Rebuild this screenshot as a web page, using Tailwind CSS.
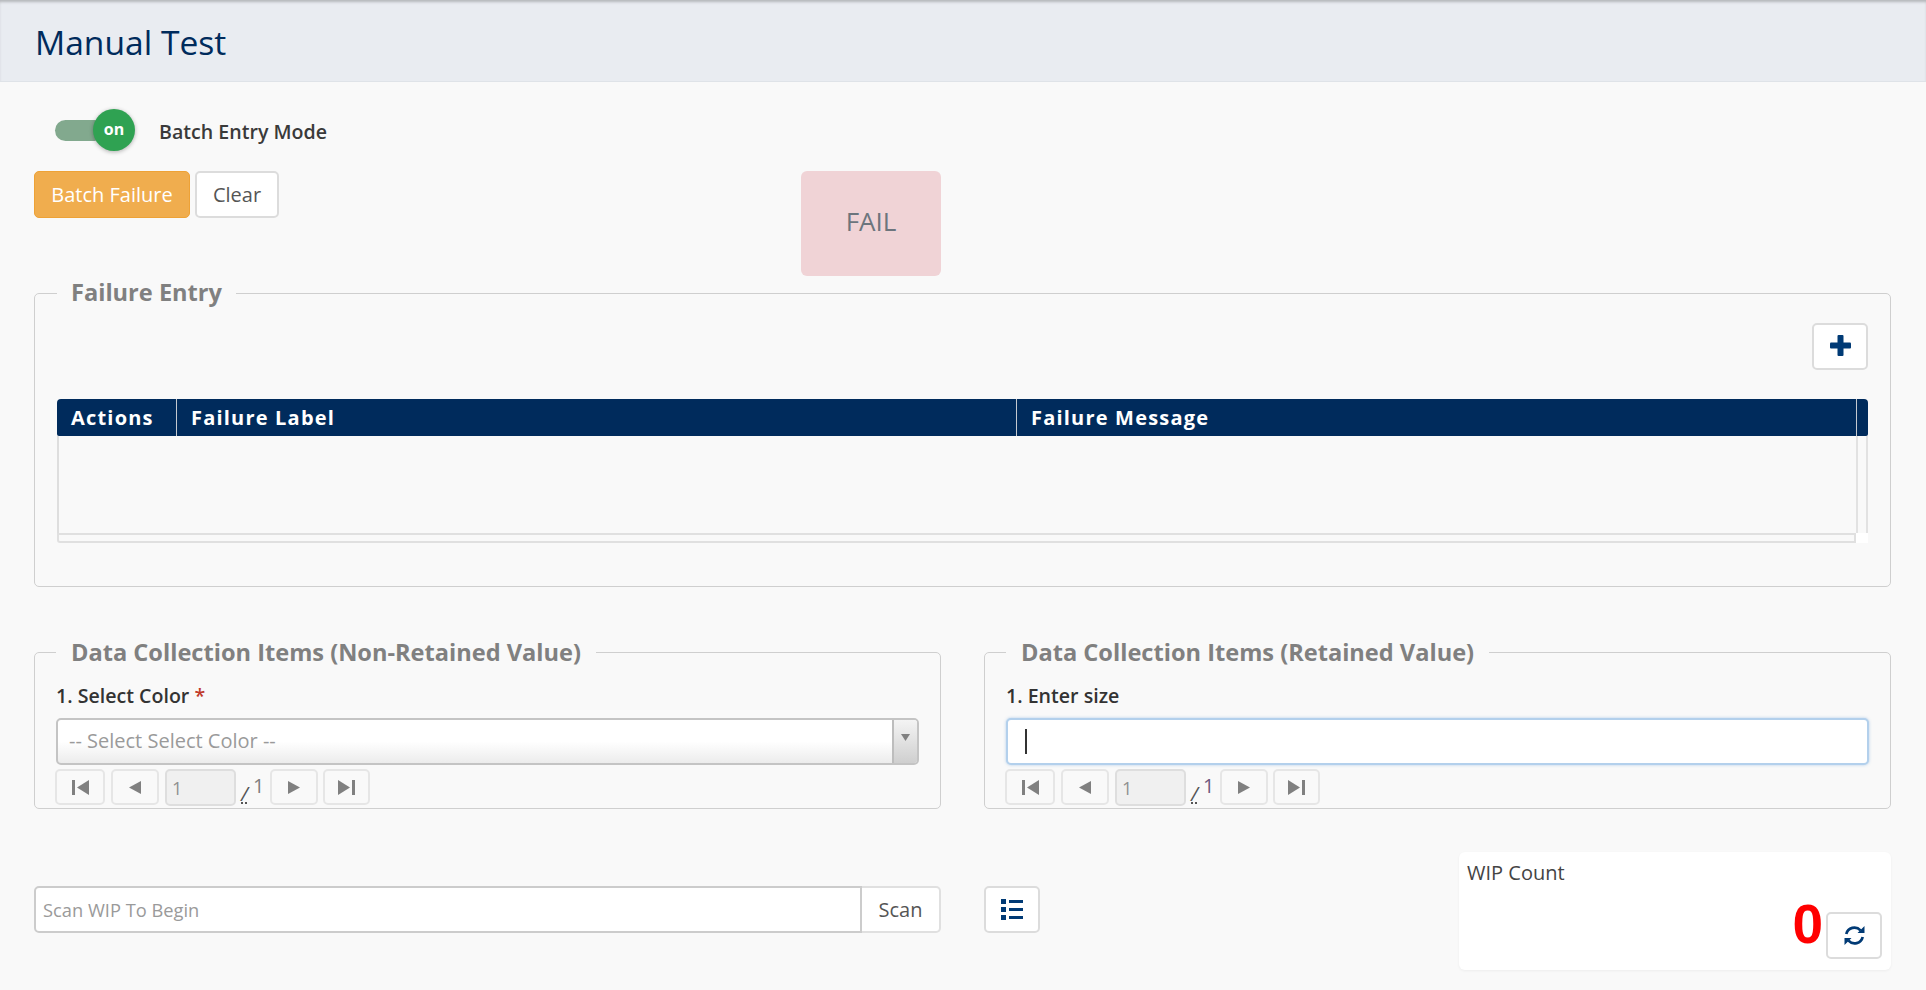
<!DOCTYPE html>
<html lang="en">
<head>
  <meta charset="UTF-8">
  <title>Manual Test</title>
  <script src="https://cdn.jsdelivr.net/npm/@tailwindcss/browser@4"></script>
</head>
<body class="bg-[#f9f9f9] min-h-screen font-['Open_Sans',sans-serif] text-[20px] text-[#333]">

  <!-- Page header -->
  <header class="h-[82px] flex items-center pl-[35px] pt-[3px] bg-[#e9ecf1] border-b border-[#dfe3e8] shadow-[inset_0_3px_3px_-1px_#b4b6ba]">
    <h1 class="text-[33.6px] text-[#002b5c]">Manual Test</h1>
  </header>

  <main class="pl-[34px] pr-[35px]">

    <!-- Batch toggle -->
    <div class="flex items-center h-[42px] mt-[27px] pl-[21px]">
      <div class="relative w-[80px] h-[42px]">
        <div class="absolute left-0 top-[11px] w-[50px] h-[21px] rounded-full bg-[#82a98e]"></div>
        <div class="absolute left-[38px] top-0 w-[42px] h-[42px] rounded-full bg-[#2fa252] shadow-[0_1px_4px_rgba(0,0,0,0.3)] flex items-center justify-center text-white text-[16px] font-bold leading-none pb-[2px]">on</div>
      </div>
      <span class="ml-[24px] font-semibold text-[19.6px] text-[#3a3a3a] pt-[3px]">Batch Entry Mode</span>
    </div>

    <!-- Actions and status -->
    <div class="grid grid-cols-2 gap-[43px] mt-[20px]">
      <div class="flex justify-between items-start">
        <div class="flex gap-[5px]">
          <button class="h-[47px] w-[156px] rounded-[5px] bg-[#f0ad4e] border border-[#eea236] text-white text-[20px]">Batch Failure</button>
          <button class="h-[47px] w-[84px] rounded-[5px] bg-white border-2 border-[#dcdcdc] text-[#555] text-[20px]">Clear</button>
        </div>
        <div class="w-[140px] h-[105px] rounded-[6px] bg-[#f0d3d6] flex items-center justify-center pb-[4px] text-[26px] text-[#6c757d]">FAIL</div>
      </div>
      <div></div>
    </div>

    <!-- Failure entry -->
    <fieldset class="mt-[2px] border border-[#cfcfcf] rounded-[5px] px-[22px] pb-[43px]">
      <legend class="px-[14px] h-[30px] leading-[28px] text-[23.6px] font-bold text-[#808080]">Failure Entry</legend>
      <div class="flex justify-end pt-[15px]">
        <button class="w-[56px] h-[47px] rounded-[5px] bg-white border-2 border-[#dcdcdc] flex items-center justify-center pb-[3px]">
          <svg class="w-[21px] h-[21px]" viewBox="0 0 21 21" fill="#003a75"><rect x="7.5" width="6" height="21" rx="1"/><rect y="7.5" width="21" height="6" rx="1"/></svg>
        </button>
      </div>
      <div class="mt-[29px]">
        <div class="flex h-[37px] rounded-t-[4px] rounded-b-[2px] bg-[#002b5c] text-white font-bold text-[20px] tracking-[1.2px] leading-[37px]">
          <div class="w-[120px] pl-[14px] border-r border-[#c4c9d0]">Actions</div>
          <div class="w-[840px] pl-[14px] border-r border-[#c4c9d0]">Failure Label</div>
          <div class="flex-1 pl-[14px] border-r border-[#c4c9d0]">Failure Message</div>
          <div class="w-[11px]"></div>
        </div>
        <div class="flex h-[97px] border-l-2 border-[#dedede]">
          <div class="flex-1"></div>
          <div class="w-[12px] border-x-2 border-[#e2e2e2]"></div>
        </div>
        <div class="flex h-[10px]">
          <div class="flex-1 border-2 border-[#e0e0e0] rounded-bl-[3px]"></div>
          <div class="w-[12px] bg-white"></div>
        </div>
      </div>
    </fieldset>

    <!-- Data collection -->
    <div class="grid grid-cols-2 gap-[43px] mt-[50px]">
      <fieldset class="border border-[#cfcfcf] rounded-[5px] pl-[21px] pr-[21px] pb-[2px]">
        <legend class="px-[15px] h-[30px] leading-[30px] text-[23.6px] font-bold text-[#808080]">Data Collection Items (Non-Retained Value)</legend>
        <label class="block mt-[17px] h-[24px] leading-[24px] font-semibold text-[19.6px] text-[#333]">1. Select Color <span class="text-[#c0392b]">*</span></label>
        <div class="mt-[10px] h-[47px] flex rounded-[5px] border-2 border-[#c4c4c4] bg-gradient-to-b from-white from-50% to-[#ececec] overflow-hidden">
          <div class="flex-1 pl-[11px] leading-[41px] text-[#9a9a9a] text-[20px]">-- Select Select Color --</div>
          <div class="w-[25px] border-l-2 border-[#bdbdbd] bg-gradient-to-b from-[#f4f4f4] to-[#cfcfcf] flex justify-center pt-[14px]">
            <svg class="w-[9px] h-[7px]" viewBox="0 0 9 7" fill="#808080"><path d="M0 0h9L4.500 7z"/></svg>
          </div>
        </div>
        <div class="mt-[4px] -ml-[1px] flex items-start h-[37px] text-[#808080]">
          <button class="w-[50px] h-[36px] rounded-[5px] border-2 border-[#e6e6e6] flex items-center justify-center">
            <svg class="w-[17px] h-[15px]" viewBox="0 0 17 15" fill="#808080"><rect width="3" height="15"/><path d="M17 0v15L5 7.500z"/></svg>
          </button>
          <button class="ml-[6px] w-[48px] h-[36px] rounded-[5px] border-2 border-[#e6e6e6] flex items-center justify-center">
            <svg class="w-[12px] h-[13px]" viewBox="0 0 12 13" fill="#808080"><path d="M12 0v13L0 6.500z"/></svg>
          </button>
          <div class="ml-[6px] w-[71px] h-[37px] rounded-[5px] border-2 border-[#dedede] bg-[#f0f0f0] pl-[5px] leading-[35px] text-[18px] text-[#909090]">1</div>
          <span class="ml-[5px] mt-[11px] text-[20px] italic underline decoration-dotted text-[#555] leading-[28px]">/</span>
          <span class="ml-[5px] mt-[1px] text-[20px] leading-[32px]">1</span>
          <button class="ml-[6px] w-[48px] h-[36px] rounded-[5px] border-2 border-[#e6e6e6] flex items-center justify-center">
            <svg class="w-[12px] h-[13px]" viewBox="0 0 12 13" fill="#808080"><path d="M0 0v13l12-6.500z"/></svg>
          </button>
          <button class="ml-[5px] w-[47px] h-[36px] rounded-[5px] border-2 border-[#e6e6e6] flex items-center justify-center">
            <svg class="w-[17px] h-[15px]" viewBox="0 0 17 15" fill="#808080"><path d="M0 0v15l12-7.500z"/><rect x="14" width="3" height="15"/></svg>
          </button>
        </div>
      </fieldset>

      <fieldset class="border border-[#cfcfcf] rounded-[5px] pl-[21px] pr-[21px] pb-[2px]">
        <legend class="px-[15px] h-[30px] leading-[30px] text-[23.6px] font-bold text-[#808080]">Data Collection Items (Retained Value)</legend>
        <label class="block mt-[17px] h-[24px] leading-[24px] font-semibold text-[19.6px] text-[#333]">1. Enter size</label>
        <div class="mt-[10px] h-[47px] flex items-center rounded-[5px] border-2 border-[#b3d0ec] bg-white shadow-[0_0_3px_rgba(102,160,220,0.5)]">
          <div class="ml-[17px] w-[2px] h-[25px] bg-[#333]"></div>
        </div>
        <div class="mt-[4px] -ml-[1px] flex items-start h-[37px] text-[#6f5a80]">
          <button class="w-[50px] h-[36px] rounded-[5px] border-2 border-[#e6e6e6] flex items-center justify-center">
            <svg class="w-[17px] h-[15px]" viewBox="0 0 17 15" fill="#808080"><rect width="3" height="15"/><path d="M17 0v15L5 7.500z"/></svg>
          </button>
          <button class="ml-[6px] w-[48px] h-[36px] rounded-[5px] border-2 border-[#e6e6e6] flex items-center justify-center">
            <svg class="w-[12px] h-[13px]" viewBox="0 0 12 13" fill="#808080"><path d="M12 0v13L0 6.500z"/></svg>
          </button>
          <div class="ml-[6px] w-[71px] h-[37px] rounded-[5px] border-2 border-[#dedede] bg-[#f0f0f0] pl-[5px] leading-[35px] text-[18px] text-[#909090]">1</div>
          <span class="ml-[5px] mt-[11px] text-[20px] italic underline decoration-dotted text-[#555] leading-[28px]">/</span>
          <span class="ml-[5px] mt-[1px] text-[20px] leading-[32px]">1</span>
          <button class="ml-[6px] w-[48px] h-[36px] rounded-[5px] border-2 border-[#e6e6e6] flex items-center justify-center">
            <svg class="w-[12px] h-[13px]" viewBox="0 0 12 13" fill="#808080"><path d="M0 0v13l12-6.500z"/></svg>
          </button>
          <button class="ml-[5px] w-[47px] h-[36px] rounded-[5px] border-2 border-[#e6e6e6] flex items-center justify-center">
            <svg class="w-[17px] h-[15px]" viewBox="0 0 17 15" fill="#808080"><path d="M0 0v15l12-7.500z"/><rect x="14" width="3" height="15"/></svg>
          </button>
        </div>
      </fieldset>
    </div>

    <!-- Scan row -->
    <div class="grid grid-cols-2 gap-[43px] mt-[43px]">
      <div class="flex h-[47px] mt-[34px]">
        <div class="flex-1 border-2 border-[#cccccc] border-r-2 rounded-l-[5px] bg-white pl-[7px] leading-[43px] text-[18.3px] text-[#9a9a9a]">Scan WIP To Begin</div>
        <button class="w-[79px] bg-white border-2 border-l-0 border-[#e0e0e0] rounded-r-[5px] text-[20px] text-[#555]">Scan</button>
      </div>
      <div class="flex justify-between items-start">
        <button class="mt-[34px] w-[56px] h-[47px] rounded-[5px] bg-white border-2 border-[#dcdcdc] flex items-center justify-center">
          <svg class="w-[22px] h-[21px]" viewBox="0 0 22 21" fill="#003a75"><rect width="5" height="5"/><rect y="8" width="5" height="5"/><rect y="16" width="5" height="5"/><rect x="8" y="1" width="14" height="3"/><rect x="8" y="9" width="14" height="3"/><rect x="8" y="17" width="14" height="3"/></svg>
        </button>
        <div class="w-[432px] h-[118px] rounded-[6px] bg-white shadow-[0_1px_3px_rgba(0,0,0,0.05)] pl-[8px] pr-[9px] flex flex-col">
          <div class="mt-[9px] text-[20px] leading-[24px] text-[#444]">WIP Count</div>
          <div class="flex justify-end items-start mt-[10px]">
            <span class="text-[55px] leading-[58px] font-bold text-[#ff0000] font-['Liberation_Sans',sans-serif]">0</span>
            <button class="ml-[3px] mt-[17px] w-[56px] h-[47px] rounded-[5px] bg-white border-2 border-[#dcdcdc] flex items-center justify-center">
              <svg class="w-[21px] h-[21px]" viewBox="0 0 21 21"><path d="M2.300 9A8.300 8.300 0 0 1 16.500 5.300M18.700 12A8.300 8.300 0 0 1 4.500 15.700" fill="none" stroke="#003a75" stroke-width="2.700"/><path d="M20.500 1v7h-7zM.5 20v-7h7z" fill="#003a75"/></svg>
            </button>
          </div>
        </div>
      </div>
    </div>

  </main>
</body>
</html>
